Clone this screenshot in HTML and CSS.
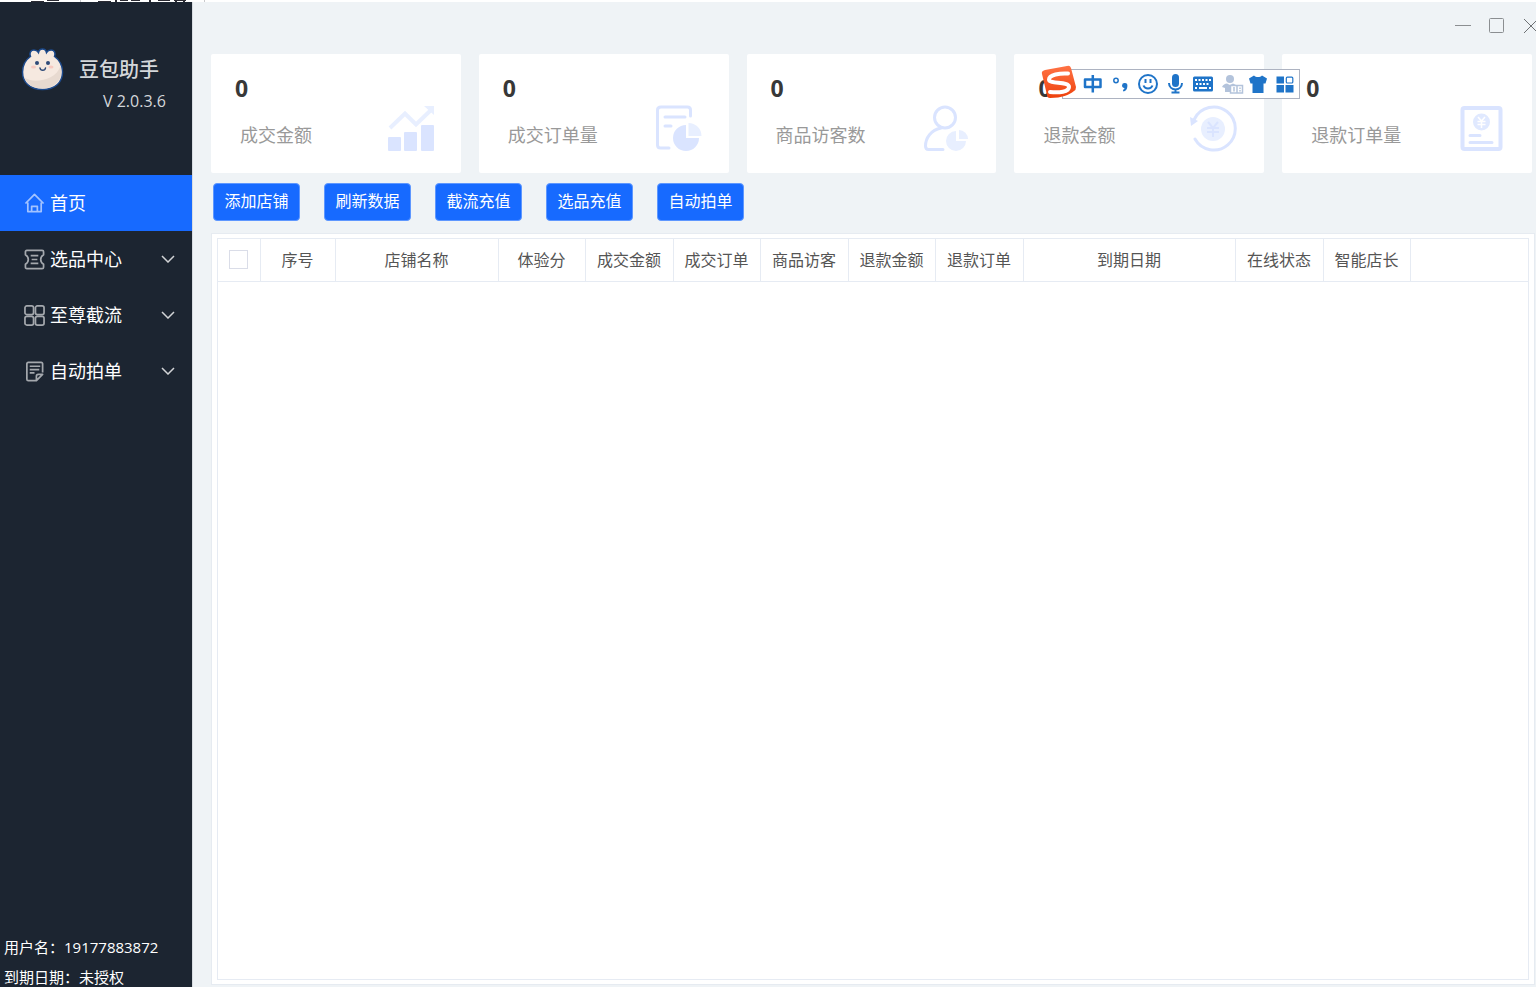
FILE: index.html
```html
<!DOCTYPE html>
<html lang="zh-CN">
<head>
<meta charset="utf-8">
<title>豆包助手</title>
<link rel="stylesheet" href="styles.css">
</head>
<body>
<div class="backdrop" aria-hidden="true">
  <svg width="210" height="2" viewBox="0 0 210 2">
    <path fill="#2b2b33" d="M31 1h13v1H31zM47 0h12v1H47zM98 1h13v1H98zM115 0h2v2h-2zM120 0h8v1h-8zM131 0h9v1h-9zM149 0h2v2h-2zM158 0h12v1h-12zM174 0h12v1h-12zM175 1h2v1h-2zM183 1h2v1h-2z"/>
    <path fill="#c9c9cc" d="M80 0h1v2h-1zM204 0h1v2h-1z"/>
  </svg>
</div>
<div class="app">
  <aside class="sidebar">
    <header class="brand">
      <svg class="brand-logo" width="44" height="44" viewBox="0 0 44 44" aria-hidden="true">
        <path fill="#f6e9e0" stroke="#1d4a8c" stroke-width="1.500" d="M21.500 41.500c-13 0-20-7.500-20-17.500 0-7 3-12 8-15.500-1.500-4 .5-6.500 3.500-6.500 2 0 3.500 1 4.500 2.500.5-2.500 2-3.500 4-3.500s3.500 1 4 3.500c1-1.500 2.500-2.500 4.500-2.500 3 0 5 2.500 3.500 6.500 5 3.500 8 8.500 8 15.500 0 10-7 17.500-20 17.500z"/>
        <path fill="#e8dad0" d="M39.500 18c4 12-5 22.500-18 22.500-9 0-16-4-18-11 7 6 31 4 36-11.500z"/>
        <g fill="#2f4a78"><circle cx="16" cy="15" r="2"/><circle cx="27" cy="15" r="2"/></g>
        <path d="M19 20c.5 3 5 3 5.500 0" fill="none" stroke="#2f4a78" stroke-width="1.500" stroke-linecap="round"/>
        <g fill="#f8c9c0"><ellipse cx="12.500" cy="19" rx="2.500" ry="1.500"/><ellipse cx="30" cy="19" rx="2.500" ry="1.500"/></g>
      </svg>
      <div class="brand-text">
        <h1 class="brand-name">豆包助手</h1>
        <p class="brand-version">V 2.0.3.6</p>
      </div>
    </header>
    <nav class="nav">
      <a class="nav-item active" href="#">
        <svg class="nav-icon" viewBox="0 0 22 22"><path d="M1.500 11L11 1.500l9.500 9.500M4 10v9.500h14V10M8 19.500V14h6v5.500"/></svg>
        <span class="nav-label">首页</span>
      </a>
      <a class="nav-item" href="#">
        <svg class="nav-icon" viewBox="0 0 22 22"><path d="M3 1.500h16c1 0 1.500.5 1.500 1.500v3c-4 2.500-4 7.500 0 10v3c0 1-.5 1.500-1.500 1.500H3c-1 0-1.500-.5-1.500-1.500v-3c4-2.500 4-7.500 0-10V3c0-1 .5-1.500 1.500-1.500zM7 7h8M8 11h6M7 15h8"/></svg>
        <span class="nav-label">选品中心</span>
        <svg class="nav-arrow" viewBox="0 0 14 8"><path d="M1 1l6 6 6-6"/></svg>
      </a>
      <a class="nav-item" href="#">
        <svg class="nav-icon" viewBox="0 0 22 22"><rect x="1" y="1" width="9" height="9" rx="2"/><rect x="12" y="1" width="9" height="9" rx="2"/><rect x="1" y="12" width="9" height="9" rx="2"/><rect x="12" y="12" width="9" height="9" rx="2"/></svg>
        <span class="nav-label">至尊截流</span>
        <svg class="nav-arrow" viewBox="0 0 14 8"><path d="M1 1l6 6 6-6"/></svg>
      </a>
      <a class="nav-item" href="#">
        <svg class="nav-icon" viewBox="0 0 22 22"><path d="M19.500 12V3c0-1-.5-1.500-1.500-1.500H4.500C3.500 1.500 3 2 3 3v16c0 1 .5 1.500 1.500 1.500H13l6.500-6.500H15c-1 0-2 1-2 2v4.500M6 5.500h11M6 9h10M6 12.500h5"/></svg>
        <span class="nav-label">自动拍单</span>
        <svg class="nav-arrow" viewBox="0 0 14 8"><path d="M1 1l6 6 6-6"/></svg>
      </a>
    </nav>
    <footer class="account">
      <p>用户名：19177883872</p>
      <p>到期日期：未授权</p>
    </footer>
  </aside>

  <main class="main">
    <div class="titlebar">
      <button class="win-btn" type="button" aria-label="最小化"><svg width="16" height="16" viewBox="0 0 16 16"><path d="M0 7.500h16"/></svg></button>
      <button class="win-btn" type="button" aria-label="最大化"><svg width="16" height="16" viewBox="0 0 16 16"><rect x=".5" y=".5" width="14" height="14" rx="1"/></svg></button>
      <button class="win-btn win-close" type="button" aria-label="关闭"><svg width="16" height="16" viewBox="0 0 16 16"><path d="M1 1l14 14M15 1L1 15"/></svg></button>
    </div>

    <section class="cards">
      <article class="card">
        <strong class="card-value">0</strong>
        <span class="card-label">成交金额</span>
        <svg class="card-icon" viewBox="0 0 48 48">
          <path fill="none" stroke="#e8efff" stroke-width="4" d="M3 24L18 9.500l11 11L44 6"/>
          <path fill="#e8efff" d="M37 2h10v9z"/>
          <g fill="#dae4ff"><rect x="1" y="33" width="13" height="14" rx="1"/><rect x="17" y="28" width="13" height="19" rx="1"/><rect x="34" y="21" width="13" height="26" rx="1"/></g>
        </svg>
      </article>
      <article class="card">
        <strong class="card-value">0</strong>
        <span class="card-label">成交订单量</span>
        <svg class="card-icon" viewBox="0 0 48 48">
          <path fill="none" stroke="#dae4ff" stroke-width="3" stroke-linecap="round" stroke-linejoin="round" d="M35.500 12V6c0-2-1-3-3-3H6C4 3 2.500 4 2.500 6v35c0 2 1 3 3 3H14M10 13h20M10 22h6"/>
          <path fill="#dae4ff" d="M31 21v13h13a13 13 0 1 1-13-13z"/>
          <path fill="#e8efff" d="M33.500 19a13 13 0 0 1 13 13h-13z"/>
        </svg>
      </article>
      <article class="card">
        <strong class="card-value">0</strong>
        <span class="card-label">商品访客数</span>
        <svg class="card-icon" viewBox="0 0 48 48">
          <g fill="none" stroke="#dae4ff" stroke-width="3" stroke-linecap="round"><circle cx="23" cy="13.500" r="10.500"/><path d="M19 24C9 26 3.500 34 3.500 42c0 2.500 1 3.500 3 3.500H21"/></g>
          <path fill="#e8efff" d="M34 27v10h10a10 10 0 1 1-10-10z"/>
          <path fill="#e8efff" d="M37 26a9 9 0 0 1 9 9h-9z"/>
        </svg>
      </article>
      <article class="card">
        <strong class="card-value">0</strong>
        <span class="card-label">退款金额</span>
        <svg class="card-icon" viewBox="0 0 48 48">
          <path fill="none" stroke="#dae4ff" stroke-width="3" stroke-linecap="round" d="M4.500 15a21.500 21.500 0 1 1 .5 20"/>
          <path fill="#dae4ff" d="M0 13l8 4-7 5z"/>
          <circle cx="23" cy="25" r="12" fill="#e8efff"/>
          <path fill="none" stroke="#dae4ff" stroke-width="2" d="M18 18l5 6 5-6M17 24h12M17 28h12M23 24v9"/>
        </svg>
        <div class="ime" role="toolbar" aria-label="输入法">
          <button class="ime-btn" type="button" aria-label="中文"><svg viewBox="0 0 20 20"><path fill="none" stroke="#1f74c8" stroke-width="2.500" stroke-linejoin="round" d="M2 5.500h15.500v7.500H2zM9.800 1v17.500"/></svg></button>
          <button class="ime-btn" type="button" aria-label="标点"><svg viewBox="0 0 20 20"><circle cx="5" cy="6.500" r="2.200" fill="none" stroke="#1f74c8" stroke-width="1.500"/><path fill="#1f74c8" d="M11 11.500a2.700 2.700 0 1 1 5.400.5c0 3.500-2 5-4 5.500l-.5-1.500c1-.5 1.500-1 1.500-2-1.400 0-2.400-1-2.400-2.500z"/></svg></button>
          <button class="ime-btn" type="button" aria-label="表情"><svg viewBox="0 0 20 20"><circle cx="10" cy="10" r="9" fill="none" stroke="#1f74c8" stroke-width="2"/><path fill="none" stroke="#1f74c8" stroke-width="2" d="M7.500 5v4M12.500 5v4M5.500 11.500c1.500 4 7.500 4 9 0"/></svg></button>
          <button class="ime-btn" type="button" aria-label="语音"><svg viewBox="0 0 20 20"><rect x="6" y="0" width="7" height="13" rx="3.500" fill="#1f74c8"/><path fill="none" stroke="#1f74c8" stroke-width="2" d="M3 9c0 8.500 13 8.500 13 0M9.500 15v4M5.500 18.500h8"/></svg></button>
          <button class="ime-btn" type="button" aria-label="键盘"><svg viewBox="0 0 20 20"><rect x="0" y="2.500" width="20" height="15" rx="1.500" fill="#1f74c8"/><path fill="#fff" d="M2 5h2v2H2zM5.500 5h2v2h-2zM9 5h2v2H9zM12.500 5h2v2h-2zM16 5h2v2h-2zM3 9h2v2H3zM6.500 9h2v2h-2zM10 9h2v2h-2zM13.500 9h2v2h-2zM2 13h2v2H2zM6 13h8v2H6zM16 13h2v2h-2z"/></svg></button>
          <button class="ime-btn" type="button" aria-label="账号"><svg viewBox="0 0 20 20"><circle cx="9" cy="5" r="4" fill="#b3c3db"/><path fill="#b3c3db" d="M1 13c1-2 3-3.500 5-3.500l3 1.500 3-1.500 4 2-6 6.500H4v-4z"/><path fill="#fff" stroke="#b3c3db" stroke-width="1.500" d="M9.500 11.500h12v7.500h-12z"/><path stroke="#b3c3db" stroke-width="1.500" d="M13 13v4.500M16 11.500V19M19 13.500V15M19 16v1.500"/></svg></button>
          <button class="ime-btn" type="button" aria-label="皮肤"><svg viewBox="0 0 20 20"><path fill="#1f74c8" d="M6 1.500c2 2 6 2 8 0l5 3-1.500 5H15.500V19h-11V9.500h-2L1 4.500z"/></svg></button>
          <button class="ime-btn" type="button" aria-label="工具箱"><svg viewBox="0 0 20 20"><path fill="#1f74c8" d="M1.500 2.500H9v7H1.500zM1.500 11H9v7.500H1.500zM10.500 11h8v7.500h-8z"/><rect x="11.300" y="3.200" width="6.500" height="5.800" rx="1" fill="none" stroke="#1f74c8" stroke-width="1.200"/></svg></button>
          <svg class="ime-logo" width="36" height="36" viewBox="0 0 36 36" aria-hidden="true">
            <defs><linearGradient id="ime-fill" x1="0" y1="0" x2="0" y2="1"><stop offset="0" stop-color="#ff7345"/><stop offset="1" stop-color="#ee410c"/></linearGradient></defs>
            <path fill="url(#ime-fill)" d="M4 5l22-4q3-1 4 2l5 19q0 3-2 4c-5 4-12 7-24 7q-3 0-3-3L1 9Q0 6 4 5z"/>
            <path fill="none" stroke="#fff" stroke-width="4" stroke-linecap="round" d="M27 8.500C19 8 8 9.500 8 14.500c0 5 20 1.500 20 7.500 0 5-10 6-19 5"/>
          </svg>
        </div>
      </article>
      <article class="card">
        <strong class="card-value">0</strong>
        <span class="card-label">退款订单量</span>
        <svg class="card-icon" viewBox="0 0 48 48">
          <rect x="4.500" y="4" width="38" height="41" rx="2" fill="none" stroke="#dae4ff" stroke-width="4"/>
          <circle cx="23.500" cy="18" r="8.500" fill="#e0e9ff"/>
          <path fill="none" stroke="#fff" stroke-width="1.500" d="M20 13l3.500 4 3.500-4M19.500 17.500h8M19.500 20.500h8M23.500 17v7"/>
          <path stroke="#dae4ff" stroke-width="3" stroke-linecap="round" d="M12 31.500h10M12 38.500h22"/>
        </svg>
      </article>
    </section>

    <div class="actions">
      <button class="action" type="button">添加店铺</button>
      <button class="action" type="button">刷新数据</button>
      <button class="action" type="button">截流充值</button>
      <button class="action" type="button">选品充值</button>
      <button class="action" type="button">自动拍单</button>
    </div>

    <section class="panel">
      <div class="table-frame">
        <table class="shops">
          <thead>
            <tr>
              <th class="col-check"><input class="check" type="checkbox" aria-label="全选"></th>
              <th class="col-index">序号</th>
              <th class="col-name">店铺名称</th>
              <th class="col-narrow">体验分</th>
              <th class="col-wide">成交金额</th>
              <th class="col-narrow">成交订单</th>
              <th class="col-wide">商品访客</th>
              <th class="col-narrow">退款金额</th>
              <th class="col-wide">退款订单</th>
              <th class="col-date">到期日期</th>
              <th class="col-wide">在线状态</th>
              <th class="col-narrow">智能店长</th>
              <td class="col-rest"></td>
            </tr>
          </thead>
        </table>
      </div>
    </section>
  </main>
</div>
</body>
</html>
```
FILE: styles.css
```css
* {
  box-sizing: border-box;
}

body {
  display: flex;
  flex-direction: column;
  height: 100vh;
  margin: 0;
  overflow: hidden;
  background: #fff;
  font-family: "Open Sans", "Noto Sans CJK SC", sans-serif;
}

button {
  padding: 0;
  border: 0;
  background: none;
  font: inherit;
}

svg {
  display: block;
  flex: none;
}

.backdrop {
  height: 2px;
}

.app {
  display: flex;
  flex: 1;
  min-height: 0;
}

/* Sidebar */
.sidebar {
  display: flex;
  flex: none;
  flex-direction: column;
  width: 192px;
  background: #1c2531;
  color: #fff;
}

.brand {
  display: flex;
  gap: 14px;
  height: 173px;
  padding: 46px 0 0 21px;
}

.brand-text {
  padding-top: 6px;
  color: #d4d7da;
}

.brand-name {
  margin: 0;
  font-size: 20px;
  font-weight: 500;
  line-height: 32px;
}

.brand-version {
  margin: 0;
  padding-left: 24px;
  font-size: 16px;
  line-height: 30px;
}

.nav-item {
  display: flex;
  align-items: center;
  height: 56px;
  padding: 0 17px 0 24px;
  color: #fff;
  font-size: 18px;
  text-decoration: none;
}

.nav-item.active {
  background: #176aff;
}

.nav-icon {
  width: 21px;
  height: 21px;
  fill: none;
  stroke: #a4a8ad;
  stroke-width: 1.8;
  stroke-linejoin: round;
}

.active .nav-icon {
  stroke: #a3c3ff;
}

.nav-label {
  flex: 1;
  padding: 0 0 2px 5px;
}

.nav-arrow {
  width: 14px;
  height: 8px;
  fill: none;
  stroke: #d2d4d6;
  stroke-width: 1.5;
}

.account {
  margin-top: auto;
  padding-left: 4px;
  font-size: 15px;
  line-height: 30px;
}

.account p {
  margin: 0;
}

.account p:last-child {
  height: 25px;
}

/* Main area */
.main {
  display: flex;
  flex: 1;
  flex-direction: column;
  min-width: 0;
  border-left: 1px solid #d8dce1;
  background: #eff3f6;
}

.titlebar {
  display: flex;
  gap: 18px;
  align-items: center;
  justify-content: flex-end;
  height: 52px;
  padding-bottom: 4px;
}

.win-btn {
  width: 16px;
  height: 16px;
  fill: none;
  stroke: #8b8e91;
}

.win-close {
  width: 13px;
  overflow: hidden;
  stroke: #6e7174;
}

.cards {
  display: grid;
  grid-template-columns: repeat(5, 1fr);
  gap: 18px;
  padding: 0 4px 0 18px;
}

.card {
  position: relative;
  display: grid;
  grid-template-columns: 1fr auto;
  grid-template-rows: 48px 54px;
  height: 119px;
  padding: 10px 26px 0 24px;
  border-radius: 2px;
  background: #fff;
}

.card-value {
  grid-column: 1 / 3;
  color: #383838;
  font-size: 23px;
  line-height: 48px;
}

.card-label {
  padding: 9px 0 0 5px;
  color: #999;
  font-size: 18px;
  line-height: 28px;
}

.card-icon {
  width: 48px;
  height: 48px;
  margin-top: -8px;
}

/* Floating input method bar */
.ime {
  position: absolute;
  top: 15px;
  left: 48px;
  z-index: 2;
  display: flex;
  align-items: center;
  justify-content: space-between;
  width: 238px;
  height: 30px;
  padding: 0 4px 0 20px;
  border: 1px solid #adb3c1;
  background: #fff;
}

.ime-btn {
  width: 20px;
  height: 20px;
}

.ime-btn svg {
  width: 20px;
  height: 20px;
  overflow: visible;
}

.ime-logo {
  position: absolute;
  top: -5px;
  left: -22px;
}

/* Action buttons */
.actions {
  display: flex;
  gap: 24px;
  padding: 10px 0 12px 20px;
}

.action {
  width: 87px;
  height: 38px;
  padding-bottom: 2px;
  border: 1px solid #5e97ff;
  border-radius: 4px;
  background: #176aff;
  color: #fff;
  font-size: 16px;
  line-height: 24px;
}

/* Shop table */
.panel {
  display: flex;
  flex: 1;
  margin: 0 1px 2px 18px;
  padding: 4px 5px 4px 5px;
  border: 1px solid #e6ebf1;
  background: #fff;
}

.table-frame {
  flex: 1;
  border: 1px solid #e6ebf3;
}

.shops {
  width: 100%;
  border-collapse: collapse;
  table-layout: fixed;
}

.shops th,
.shops td {
  height: 42px;
  padding: 0;
  border-bottom: 1px solid #e6ebf3;
  color: #555;
  font-size: 16px;
  font-weight: 400;
  line-height: 24px;
  text-align: center;
  white-space: nowrap;
}

.shops th {
  border-right: 1px solid #e6ebf3;
}

.shops .col-check {
  width: 42px;
}

.col-index {
  width: 75px;
}

.col-name {
  width: 163px;
}

.col-narrow {
  width: 87px;
}

.col-wide {
  width: 88px;
}

.col-date {
  width: 212px;
}

.check {
  display: block;
  width: 19px;
  height: 19px;
  margin: 0 auto;
  border: 1px solid #dadde8;
  background: #fff;
  appearance: none;
}
```
